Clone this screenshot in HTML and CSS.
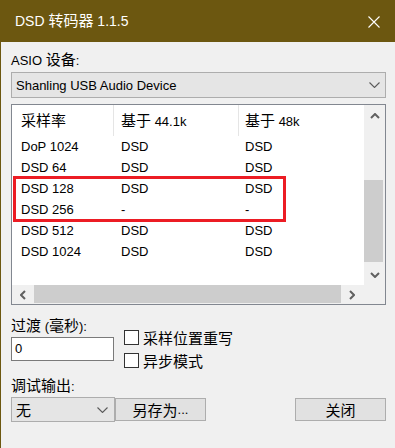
FILE: index.html
```html
<!DOCTYPE html>
<html lang="zh-CN">
<head>
    <meta charset="UTF-8">
    <title>DSD 转码器 1.1.5</title>
    <link rel="stylesheet" href="styles.css">
</head>
<body>
    <div class="window">
        <div class="titlebar">
            <span class="title">DSD <span class="zh">转码器</span> 1.1.5</span>
            <svg class="close-x" width="12" height="12" viewBox="0 0 12 12">
                <path d="M0.5 0.5 L11.5 11.5 M11.5 0.5 L0.5 11.5" stroke="#fff" stroke-width="1.1" fill="none"/>
            </svg>
        </div>

        <div class="content">
            <div class="label first">ASIO <span class="zh">设备</span>:</div>
            <div class="combo device">
                <span>Shanling USB Audio Device</span>
                <svg class="chevron" width="11" height="6" viewBox="0 0 11 6">
                    <path d="M0.5 0.5 L5.5 5.5 L10.5 0.5" stroke="#5a5a5a" stroke-width="1.1" fill="none"/>
                </svg>
            </div>

            <div class="list">
                <div class="list-top">
                    <div class="table">
                        <div class="cell head sep zh">采样率</div>
                        <div class="cell head sep"><span class="zh">基于</span> 44.1k</div>
                        <div class="cell head"><span class="zh">基于</span> 48k</div>

                        <div class="cell">DoP 1024</div><div class="cell">DSD</div><div class="cell">DSD</div>
                        <div class="cell">DSD 64</div><div class="cell">DSD</div><div class="cell">DSD</div>
                        <div class="cell">DSD 128</div><div class="cell">DSD</div><div class="cell">DSD</div>
                        <div class="cell">DSD 256</div><div class="cell">-</div><div class="cell">-</div>
                        <div class="cell">DSD 512</div><div class="cell">DSD</div><div class="cell">DSD</div>
                        <div class="cell">DSD 1024</div><div class="cell">DSD</div><div class="cell">DSD</div>
                    </div>
                    <div class="vscroll">
                        <div class="arrow-btn">
                            <svg width="10" height="6" viewBox="0 0 10 6"><path d="M1 5 L5 1 L9 5" stroke="#606060" stroke-width="2" fill="none"/></svg>
                        </div>
                        <div class="track">
                            <div class="vthumb"></div>
                        </div>
                        <div class="arrow-btn">
                            <svg width="10" height="6" viewBox="0 0 10 6"><path d="M1 1 L5 5 L9 1" stroke="#606060" stroke-width="2" fill="none"/></svg>
                        </div>
                    </div>
                </div>
                <div class="hscroll">
                    <div class="arrow-btn">
                        <svg width="6" height="10" viewBox="0 0 6 10"><path d="M5 1 L1 5 L5 9" stroke="#606060" stroke-width="2" fill="none"/></svg>
                    </div>
                    <div class="hthumb"></div>
                    <div class="arrow-btn">
                        <svg width="6" height="10" viewBox="0 0 6 10"><path d="M1 1 L5 5 L1 9" stroke="#606060" stroke-width="2" fill="none"/></svg>
                    </div>
                    <div class="corner"></div>
                </div>
                <div class="highlight"></div>
            </div>

            <div class="options">
                <div class="delay">
                    <div class="label"><span class="zh">过渡</span> (<span class="zh">毫秒</span>):</div>
                    <div class="edit">0</div>
                </div>
                <div class="checks">
                    <div class="check"><span class="box"></span><span class="zh">采样位置重写</span></div>
                    <div class="check"><span class="box"></span><span class="zh">异步模式</span></div>
                </div>
            </div>

            <div class="label debug"><span class="zh">调试输出</span>:</div>
            <div class="bottom-row">
                <div class="combo small">
                    <span class="zh">无</span>
                    <svg class="chevron" width="11" height="6" viewBox="0 0 11 6">
                        <path d="M0.5 0.5 L5.5 5.5 L10.5 0.5" stroke="#5a5a5a" stroke-width="1.1" fill="none"/>
                    </svg>
                </div>
                <div class="button save"><span class="zh">另存为</span>...</div>
                <div class="button close"><span class="zh">关闭</span></div>
            </div>
        </div>
    </div>
</body>
</html>
```

FILE: styles.css
```css
* {
    box-sizing: border-box;
    margin: 0;
    padding: 0;
}

body {
    font-family: "Liberation Sans", "Noto Sans CJK SC", sans-serif;
    font-size: 13px;
    color: #000;
    background: #f0f0f0;
}

.zh {
    font-size: 15px;
}

.window {
    width: 395px;
    height: 448px;
    border-left: 1px solid #6c5710;
    background: #f0f0f0;
}

.titlebar {
    height: 42px;
    background: #6c5710;
    color: #fff;
    display: flex;
    align-items: center;
    justify-content: space-between;
    padding: 0 15px 0 14px;
}

.title {
    font-size: 14px;
    line-height: 20px;
}

.close-x {
    display: block;
    margin-top: 1px;
}

.content {
    padding: 0 8px 0 10px;
}

.label {
    height: 18px;
    line-height: 18px;
    white-space: nowrap;
}

.label.first {
    margin-top: 9px;
}

.combo {
    display: flex;
    align-items: center;
    justify-content: space-between;
    background: #e5e5e5;
    border: 1px solid #adadad;
    padding: 0 5px 0 4px;
}

.combo.device {
    margin-top: 3px;
    height: 26px;
    width: 375px;
}

.list {
    position: relative;
    margin-top: 6px;
    width: 375px;
    height: 201px;
    border: 1px solid #828790;
    background: #fff;
    display: flex;
    flex-direction: column;
}

.list-top {
    display: flex;
    height: 180px;
}

.table {
    flex: 1;
    display: grid;
    grid-template-columns: 102px 125px 1fr;
    grid-auto-rows: 21px;
    grid-template-rows: 31px;
    align-content: start;
}

.cell {
    line-height: 21px;
    padding-left: 9px;
    white-space: nowrap;
}

.cell:nth-child(3n+2) {
    padding-left: 7px;
}

.cell:nth-child(3n) {
    padding-left: 6px;
}

.cell.head {
    line-height: 31px;
}

.cell.sep {
    border-right: 1px solid #e5e5e5;
}

.vscroll {
    width: 21px;
    background: #f0f0f0;
    display: flex;
    flex-direction: column;
}

.arrow-btn {
    display: flex;
    align-items: center;
    justify-content: center;
    flex: 0 0 21px;
}

.track {
    flex: 1;
    padding: 54px 2px 0 0;
}

.vthumb {
    height: 82px;
    background: #cdcdcd;
}

.hscroll {
    flex: 1;
    display: flex;
    background: #f0f0f0;
}

.hscroll .arrow-btn {
    flex-basis: 22px;
}

.hthumb {
    flex: 0 0 307px;
    margin: 0 0 1px 0;
    background: #cdcdcd;
}

.corner {
    flex: 1;
    background: #f0f0f0;
}

.highlight {
    position: absolute;
    left: 1px;
    top: 71px;
    width: 273px;
    height: 46px;
    border: 3px solid #ec1c24;
}

.options {
    display: flex;
    margin-top: 12px;
    height: 54px;
}

.delay {
    width: 103px;
}

.edit {
    margin-top: 2px;
    height: 24px;
    background: #fff;
    border: 1px solid #7a7a7a;
    padding-left: 3px;
    line-height: 22px;
}

.checks {
    margin-left: 10px;
    padding-top: 9px;
}

.check {
    display: flex;
    align-items: center;
    height: 23px;
    white-space: nowrap;
}

.box {
    width: 15px;
    height: 15px;
    border: 1px solid #333;
    background: #fff;
    margin-right: 4px;
}

.label.debug {
    margin-top: 6px;
}

.bottom-row {
    display: flex;
    align-items: flex-start;
    margin-top: 2px;
}

.combo.small {
    width: 104px;
    height: 25px;
    padding: 0 6px 0 4px;
}

.button {
    margin-top: 1px;
    height: 23px;
    width: 91px;
    background: #e1e1e1;
    border: 1px solid #adadad;
    display: flex;
    align-items: center;
    justify-content: center;
}

.button.save {
    margin-left: 0;
}

.button.close {
    margin-left: auto;
    margin-right: 1px;
}
```
